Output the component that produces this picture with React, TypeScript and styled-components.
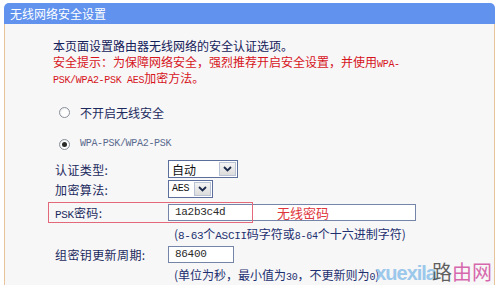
import React from 'react';
import styled, { createGlobalStyle } from 'styled-components';

const GlobalStyle = createGlobalStyle`
  html, body {
    margin: 0;
    padding: 0;
    background: #ffffff;
  }
  body {
    font-family: "Noto Sans CJK SC", "Liberation Sans", sans-serif;
    font-size: 12px;
  }
`;

const Screen = styled.div`
  position: relative;
  width: 500px;
  height: 285px;
  overflow: hidden;
  padding: 3px 0 0 4px;
  box-sizing: border-box;
`;

const Panel = styled.div`
  width: 491px;
  display: flex;
  flex-direction: column;
`;

const TitleBar = styled.div`
  height: 21px;
  background: #6193ee;
  border-radius: 5px 5px 0 0;
  color: #ffffff;
  font-size: 12px;
  line-height: 21px;
  padding-left: 6px;
`;

const Body = styled.div`
  height: 270px;
  background: #f7f7f7;
  border-left: 1px solid #e7c499;
  border-right: 1px solid #e7c499;
  padding-top: 14px;
`;

const Intro = styled.div`
  padding-left: 48px;
  font-size: 12px;
  color: #14205a;
`;

const Line = styled.div<{ $warn?: boolean }>`
  height: 16px;
  line-height: 16px;
  overflow: visible;
  white-space: nowrap;
  color: ${p => (p.$warn ? '#d6141c' : 'inherit')};
`;

const Mono = styled.span<{ $size?: number }>`
  font-family: "Liberation Mono", monospace;
  font-size: ${p => p.$size ?? 10}px;
  line-height: 1;
  letter-spacing: -0.3px;
`;

const RadioRow = styled.div<{ $top: number }>`
  display: flex;
  align-items: center;
  gap: 6px;
  height: 16px;
  margin-top: ${p => p.$top}px;
  padding-left: 54px;
  color: #1c2a5e;
`;

const Radio = styled.span<{ $checked?: boolean }>`
  width: 11px;
  height: 11px;
  box-sizing: border-box;
  border-radius: 50%;
  border: 1px solid #8a8f99;
  background: radial-gradient(circle at 60% 60%, #ffffff 40%, #e4e4e4 100%);
  display: flex;
  align-items: center;
  justify-content: center;
  margin-right: 4px;
  &::after {
    content: '';
    display: ${p => (p.$checked ? 'block' : 'none')};
    width: 5px;
    height: 5px;
    border-radius: 50%;
    background: #2a2a2a;
  }
`;

const WpaLabel = styled(Mono)`
  color: #5a6a8e;
`;

const Form = styled.div`
  padding-left: 43px;
  display: flex;
  flex-direction: column;
`;

const Row = styled.div<{ $top: number; $h: number }>`
  position: relative;
  display: flex;
  align-items: center;
  height: ${p => p.$h}px;
  margin-top: ${p => p.$top}px;
`;

const Label = styled.div`
  width: 120px;
  box-sizing: border-box;
  padding-left: 7px;
  color: #1c2a5e;
  font-size: 12px;
  letter-spacing: 0.4px;
`;

const Select = styled.div<{ $w: number }>`
  width: ${p => p.$w}px;
  height: 18px;
  box-sizing: border-box;
  border: 1px solid #5b6e9c;
  background: #ffffff;
  display: flex;
  align-items: center;
  justify-content: space-between;
  padding-left: 3px;
  color: #111;
`;

const Arrow = styled.span`
  width: 17px;
  height: 14px;
  margin-right: 1px;
  background: linear-gradient(#f4f4f4, #dcdcdc);
  border: 1px solid #b9c2d4;
  box-sizing: border-box;
  display: flex;
  align-items: center;
  justify-content: center;
`;

const TextBox = styled.div<{ $w: number; $h: number }>`
  width: ${p => p.$w}px;
  height: ${p => p.$h}px;
  box-sizing: border-box;
  border: 1px solid #7585a9;
  background: #ffffff;
  display: flex;
  align-items: center;
  padding-left: 6px;
  color: #2a2a2a;
`;

const Note = styled.div<{ $top: number }>`
  margin-top: ${p => p.$top}px;
  padding-left: 126px;
  height: 16px;
  line-height: 16px;
  white-space: nowrap;
  color: #1d2f70;
  font-size: 12px;
`;

const Highlight = styled.div`
  position: absolute;
  left: 0;
  top: 0;
  width: 205px;
  height: 21px;
  box-sizing: border-box;
  border: 1px solid #e2687a;
  pointer-events: none;
`;

const Annotation = styled.span`
  position: absolute;
  left: 229px;
  top: 1px;
  color: #e0353c;
  font-size: 13px;
`;

const Watermark = styled.div`
  position: absolute;
  right: 8px;
  bottom: -1px;
  display: flex;
  align-items: baseline;
  font-size: 20px;
  line-height: 26px;
`;

const MarkLatin = styled.span`
  font-family: "Liberation Sans", sans-serif;
  font-weight: bold;
  letter-spacing: -1px;
  margin-right: -4px;
  color: #8cc0ea;
  opacity: 0.85;
`;

const MarkCjk = styled.span<{ $color: string }>`
  color: ${p => p.$color};
  opacity: 0.8;
`;

const Chevron = () => (
  <svg width="9" height="6" viewBox="0 0 9 6">
    <path d="M1 1 L4.5 4.5 L8 1" fill="none" stroke="#1b2a4a" strokeWidth="1.8" />
  </svg>
);

const App: React.FC = () => {
  return (
    <Screen>
      <GlobalStyle />
      <Panel>
        <TitleBar>无线网络安全设置</TitleBar>
        <Body>
          <Intro>
            <Line>本页面设置路由器无线网络的安全认证选项。</Line>
            <Line $warn>
              安全提示：为保障网络安全，强烈推荐开启安全设置，并使用<Mono>WPA-</Mono>
            </Line>
            <Line $warn>
              <Mono>PSK/WPA2-PSK AES</Mono>加密方法。
            </Line>
          </Intro>

          <RadioRow $top={18}>
            <Radio />
            不开启无线安全
          </RadioRow>
          <RadioRow $top={16}>
            <Radio $checked />
            <WpaLabel>WPA-PSK/WPA2-PSK</WpaLabel>
          </RadioRow>

          <Form>
            <Row $top={8} $h={18}>
              <Label>认证类型:</Label>
              <Select $w={70}>
                自动
                <Arrow>
                  <Chevron />
                </Arrow>
              </Select>
            </Row>
            <Row $top={2} $h={18}>
              <Label>加密算法:</Label>
              <Select $w={45}>
                <Mono $size={10}>AES</Mono>
                <Arrow>
                  <Chevron />
                </Arrow>
              </Select>
            </Row>
            <Row $top={4} $h={21}>
              <Label>
                <Mono $size={11}>PSK</Mono>密码:
              </Label>
              <TextBox $w={248} $h={17}>
                <Mono $size={11}>1a2b3c4d</Mono>
              </TextBox>
              <Highlight />
              <Annotation>无线密码</Annotation>
            </Row>
            <Note $top={3}>
              (<Mono $size={11}>8-63</Mono>个<Mono $size={11}>ASCII</Mono>码字符或<Mono $size={10}>8-64</Mono>个十六进制字符)
            </Note>
            <Row $top={4} $h={17}>
              <Label>组密钥更新周期:</Label>
              <TextBox $w={66} $h={17}>
                <Mono $size={11}>86400</Mono>
              </TextBox>
            </Row>
            <Note $top={4}>
              (单位为秒，最小值为<Mono $size={10}>30</Mono>，不更新则为<Mono $size={10}>0</Mono>)
            </Note>
          </Form>
        </Body>
      </Panel>
      <Watermark>
        <MarkLatin>xuexila</MarkLatin>
        <MarkCjk $color="#3a3a3a">路</MarkCjk>
        <MarkCjk $color="#d0449a">由网</MarkCjk>
      </Watermark>
    </Screen>
  );
};

export default App;
